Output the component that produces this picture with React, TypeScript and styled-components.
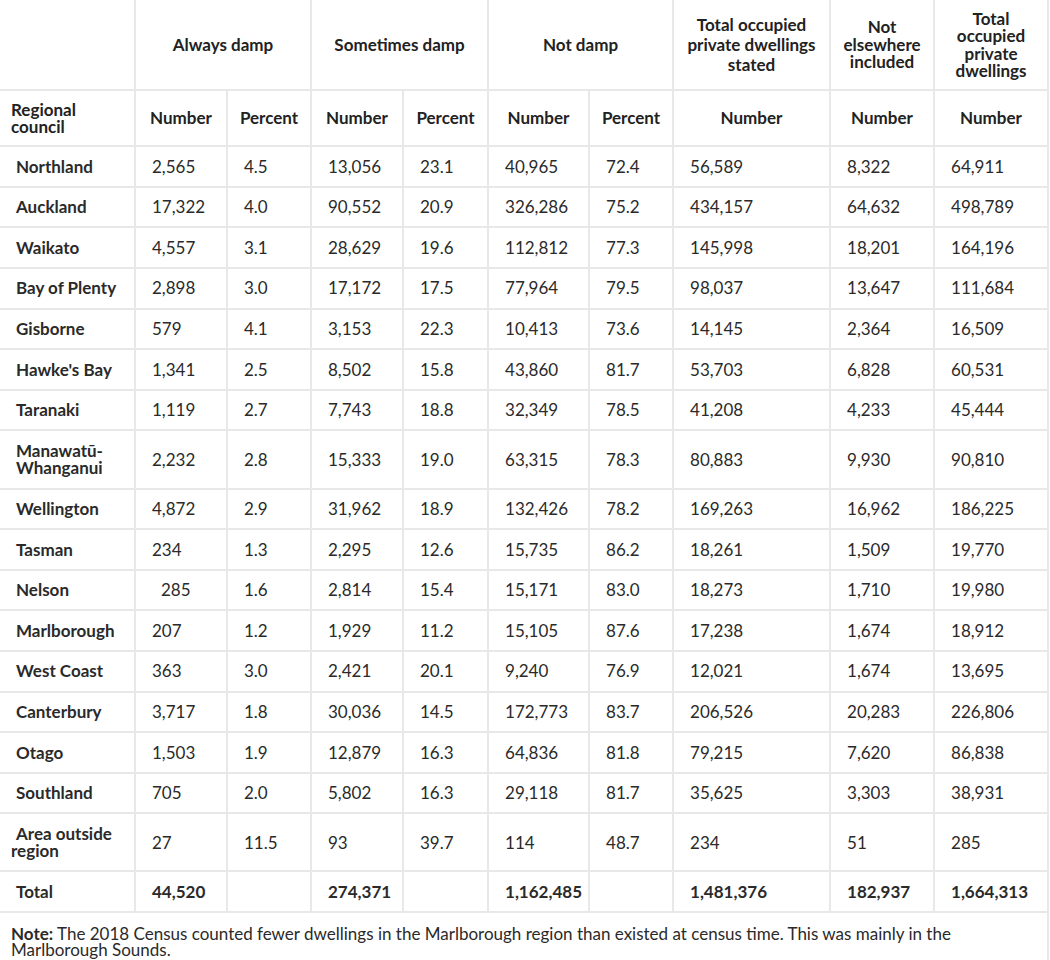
import React from "react";
import styled, { createGlobalStyle } from "styled-components";

const Global = createGlobalStyle`
  html, body { margin: 0; padding: 0; background: #fff; }
  body { font-family: Lato, "Noto Sans", "Liberation Sans", sans-serif; color: #222; }
`;

const Table = styled.table`
  width: 1048px;
  border-collapse: collapse;
  table-layout: fixed;
  font-size: 17px;
  line-height: 17.6px;
`;

const Cell = styled.td<{ $bold?: boolean; $pl?: number }>`
  border: 2px solid #e8e8e8;
  padding: 10.5px 4px 10.5px ${(p) => (p.$pl ?? 16)}px;
  font-weight: ${(p) => (p.$bold ? 700 : 400)};
  text-align: left;
  line-height: 17.6px;
  vertical-align: middle;
  color: #2a2a2a;
  &:first-child { border-left: none; }
`;

const HeadCell = styled.th<{ $left?: boolean; $lh?: number }>`
  border: 2px solid #e8e8e8;
  padding: ${(p) => (p.$left ? "9.5px 4px 9.5px 11px" : "9px 4px")};
  font-weight: 700;
  text-align: ${(p) => (p.$left ? "left" : "center")};
  line-height: ${(p) => (p.$lh ? `${p.$lh}px` : "17.6px")};
  vertical-align: middle;
  color: #222;
  &:first-child { border-left: none; }
`;

const TopHead = styled.tr`
  height: 90px;
  & > th { border-top: none; }
`;

const NoteCell = styled.td`
  border: 2px solid #e8e8e8;
  border-left: none;
  border-bottom: none;
  padding: 13px 11px 8px 11px;
  line-height: 15.5px;
  font-size: 17px;
  color: #2a2a2a;
`;

const widths = [135, 92, 84, 92, 85, 101, 84, 157, 104, 114];

type Row = {
  name: string;
  v: string[];
  nameIndent?: boolean;
  bold?: boolean;
  firstIndent?: boolean;
};

const rows: Row[] = [
  { name: "Northland", v: ["2,565", "4.5", "13,056", "23.1", "40,965", "72.4", "56,589", "8,322", "64,911"] },
  { name: "Auckland", v: ["17,322", "4.0", "90,552", "20.9", "326,286", "75.2", "434,157", "64,632", "498,789"] },
  { name: "Waikato", v: ["4,557", "3.1", "28,629", "19.6", "112,812", "77.3", "145,998", "18,201", "164,196"] },
  { name: "Bay of Plenty", v: ["2,898", "3.0", "17,172", "17.5", "77,964", "79.5", "98,037", "13,647", "111,684"] },
  { name: "Gisborne", v: ["579", "4.1", "3,153", "22.3", "10,413", "73.6", "14,145", "2,364", "16,509"] },
  { name: "Hawke's Bay", v: ["1,341", "2.5", "8,502", "15.8", "43,860", "81.7", "53,703", "6,828", "60,531"] },
  { name: "Taranaki", v: ["1,119", "2.7", "7,743", "18.8", "32,349", "78.5", "41,208", "4,233", "45,444"] },
  { name: "Manawatū-Whanganui", v: ["2,232", "2.8", "15,333", "19.0", "63,315", "78.3", "80,883", "9,930", "90,810"] },
  { name: "Wellington", v: ["4,872", "2.9", "31,962", "18.9", "132,426", "78.2", "169,263", "16,962", "186,225"] },
  { name: "Tasman", v: ["234", "1.3", "2,295", "12.6", "15,735", "86.2", "18,261", "1,509", "19,770"] },
  { name: "Nelson", v: ["285", "1.6", "2,814", "15.4", "15,171", "83.0", "18,273", "1,710", "19,980"], firstIndent: true },
  { name: "Marlborough", v: ["207", "1.2", "1,929", "11.2", "15,105", "87.6", "17,238", "1,674", "18,912"] },
  { name: "West Coast", v: ["363", "3.0", "2,421", "20.1", "9,240", "76.9", "12,021", "1,674", "13,695"] },
  { name: "Canterbury", v: ["3,717", "1.8", "30,036", "14.5", "172,773", "83.7", "206,526", "20,283", "226,806"] },
  { name: "Otago", v: ["1,503", "1.9", "12,879", "16.3", "64,836", "81.8", "79,215", "7,620", "86,838"] },
  { name: "Southland", v: ["705", "2.0", "5,802", "16.3", "29,118", "81.7", "35,625", "3,303", "38,931"] },
  { name: "Area outside region", v: ["27", "11.5", "93", "39.7", "114", "48.7", "234", "51", "285"], nameIndent: true },
  { name: "Total", v: ["44,520", "", "274,371", "", "1,162,485", "", "1,481,376", "182,937", "1,664,313"], bold: true },
];

const Indent = styled.span`
  display: inline-block;
  width: 5px;
`;

export default function App() {
  return (
    <>
      <Global />
      <Table>
        <colgroup>
          {widths.map((w, i) => (
            <col key={i} style={{ width: w }} />
          ))}
        </colgroup>
        <thead>
          <TopHead>
            <HeadCell />
            <HeadCell colSpan={2}>Always damp</HeadCell>
            <HeadCell colSpan={2}>Sometimes damp</HeadCell>
            <HeadCell colSpan={2}>Not damp</HeadCell>
            <HeadCell $lh={20}>Total occupied private dwellings stated</HeadCell>
            <HeadCell>Not elsewhere included</HeadCell>
            <HeadCell $lh={17.5}>Total occupied private dwellings</HeadCell>
          </TopHead>
          <tr>
            <HeadCell $left>Regional council</HeadCell>
            {["Number", "Percent", "Number", "Percent", "Number", "Percent", "Number", "Number", "Number"].map((t, i) => (
              <HeadCell key={i}>{t}</HeadCell>
            ))}
          </tr>
        </thead>
        <tbody>
          {rows.map((r) => (
            <tr key={r.name}>
              <Cell $bold $pl={r.nameIndent ? 11 : 16}>
                {r.nameIndent ? <Indent /> : null}
                {r.name}
              </Cell>
              {r.v.map((x, i) => (
                <Cell key={i} $bold={r.bold} $pl={i === 0 && r.firstIndent ? 25 : 16}>
                  {x}
                </Cell>
              ))}
            </tr>
          ))}
          <tr>
            <NoteCell colSpan={10}>
              <b>Note:</b> The 2018 Census counted fewer dwellings in the Marlborough region than existed at census time. This was mainly in the Marlborough Sounds.
            </NoteCell>
          </tr>
        </tbody>
      </Table>
    </>
  );
}
